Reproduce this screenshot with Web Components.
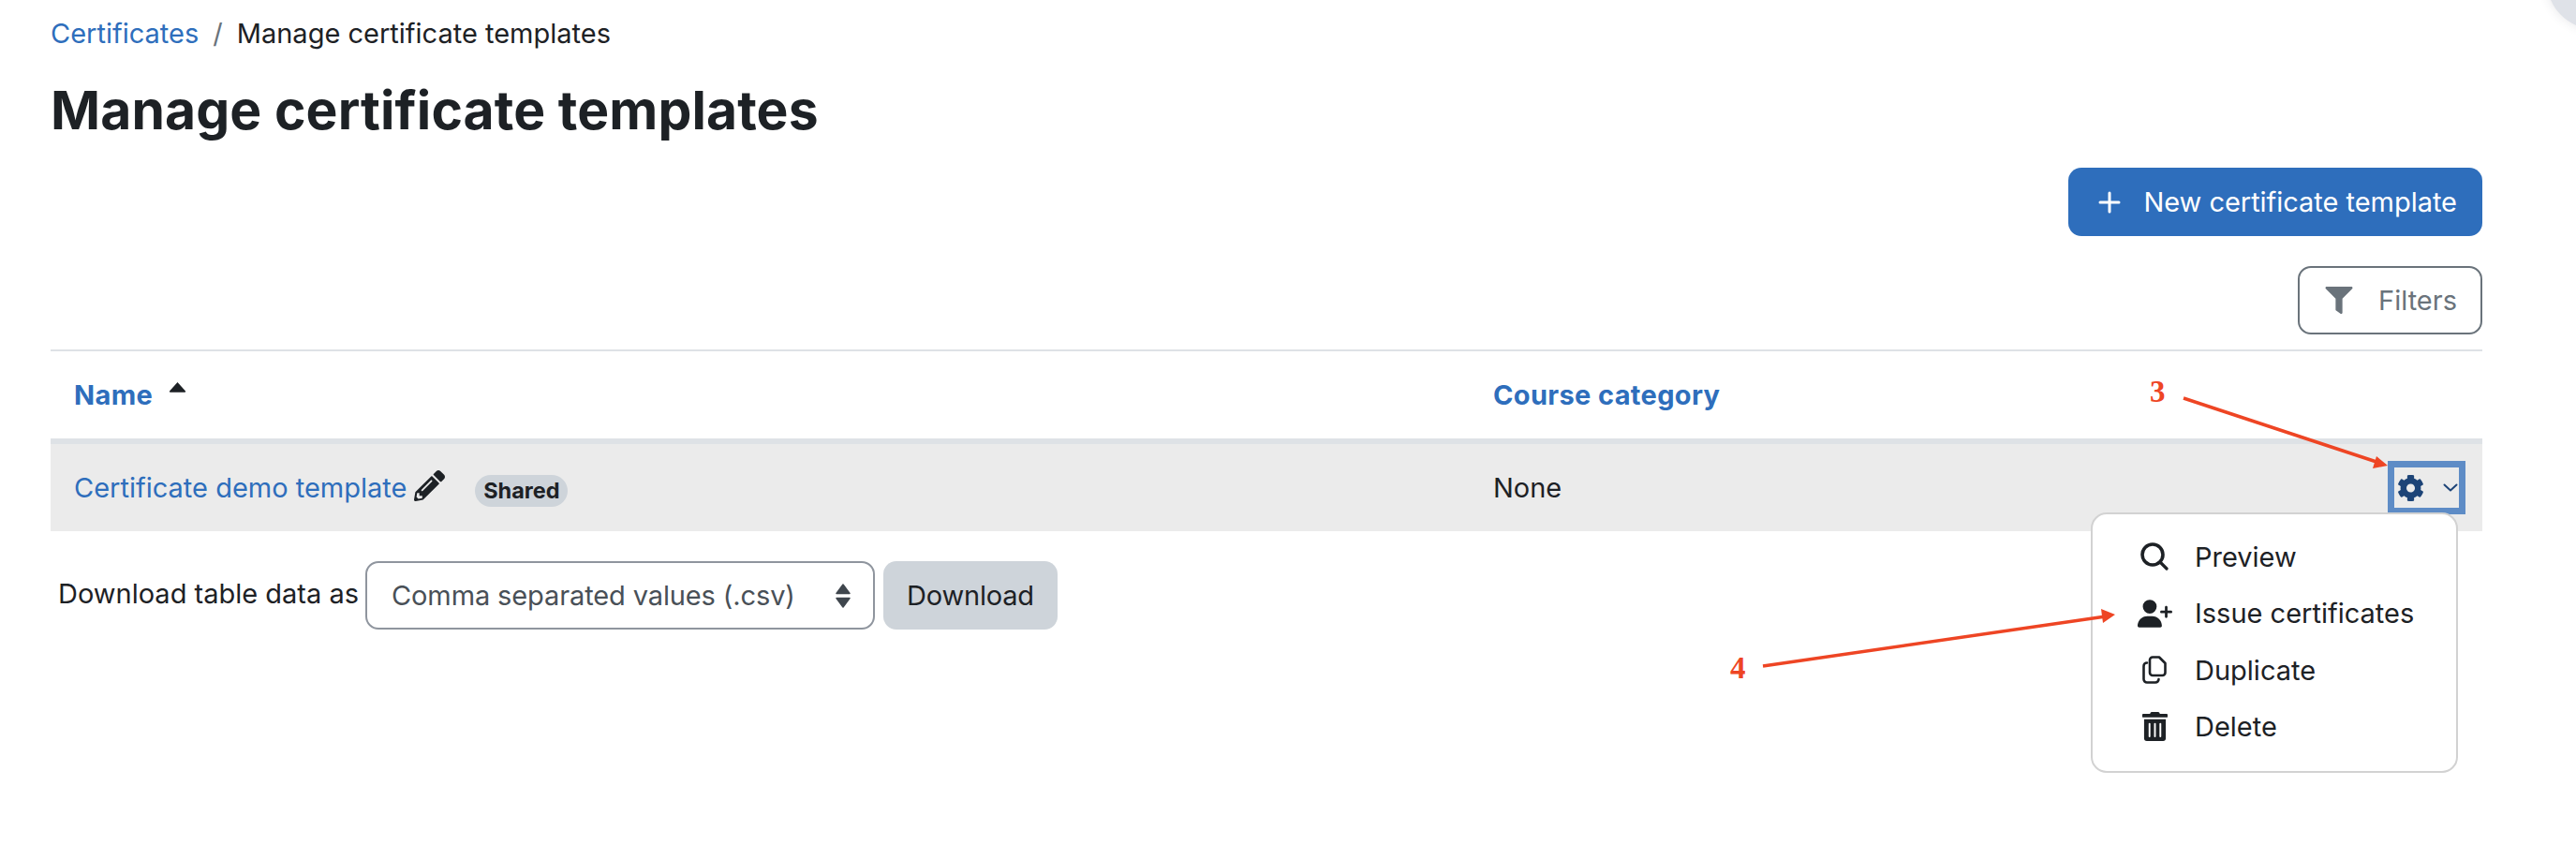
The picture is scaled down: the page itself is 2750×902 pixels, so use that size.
<!DOCTYPE html>
<html lang="en"><head><meta charset="utf-8"><title>Manage certificate templates</title>
<style>
html,body{margin:0;padding:0;background:#fff;overflow:hidden;width:2750px;height:902px}
body{font-family:Inter,"Liberation Sans",sans-serif;font-size:29px;color:#1d2125}
</style></head><body>
<cert-page></cert-page>
<script>
const ICONS={
gear:['0 0 512 512','M487.4 315.7l-42.6-24.6c4.3-23.2 4.3-47 0-70.2l42.6-24.6c4.9-2.8 7.1-8.6 5.5-14-11.1-35.6-30-67.8-54.7-94.6-3.8-4.1-10-5.1-14.8-2.3L380.8 110c-17.9-15.4-38.5-27.3-60.8-35.1V25.8c0-5.6-3.9-10.5-9.4-11.7-36.7-8.2-74.3-7.8-109.2 0-5.5 1.2-9.4 6.1-9.4 11.7V75c-22.2 7.9-42.8 19.8-60.8 35.1L88.7 85.5c-4.9-2.8-11-1.9-14.8 2.3-24.7 26.7-43.6 58.9-54.7 94.6-1.7 5.4.6 11.2 5.5 14L67.3 221c-4.3 23.2-4.3 47 0 70.2l-42.6 24.6c-4.9 2.8-7.1 8.6-5.5 14 11.1 35.6 30 67.8 54.7 94.6 3.8 4.1 10 5.1 14.8 2.3l42.6-24.6c17.9 15.4 38.5 27.3 60.8 35.1v49.2c0 5.6 3.9 10.5 9.4 11.7 36.7 8.2 74.3 7.8 109.2 0 5.5-1.2 9.4-6.1 9.4-11.7v-49.2c22.2-7.9 42.8-19.8 60.8-35.1l42.6 24.6c4.9 2.8 11 1.9 14.8-2.3 24.7-26.7 43.6-58.9 54.7-94.6 1.5-5.5-.7-11.3-5.6-14.1zM256 336c-44.1 0-80-35.9-80-80s35.9-80 80-80 80 35.9 80 80-35.9 80-80 80z'],
pencil:['0 0 512 512','M497.9 142.1l-46.1 46.1c-4.7 4.7-12.3 4.7-17 0l-111-111c-4.7-4.7-4.7-12.3 0-17l46.1-46.1c18.7-18.7 49.1-18.7 67.9 0l60.1 60.1c18.8 18.7 18.8 49.1 0 67.9zM284.2 99.8L21.6 362.4.4 483.9c-2.9 16.4 11.4 30.6 27.8 27.8l121.5-21.3 262.6-262.6c4.7-4.7 4.7-12.3 0-17l-111-111c-4.8-4.7-12.4-4.7-17.1 0zM124.1 339.9c-5.5-5.5-5.5-14.3 0-19.8l154-154c5.5-5.5 14.3-5.5 19.8 0s5.5 14.3 0 19.8l-154 154c-5.5 5.5-14.3 5.5-19.8 0zM88 424h48v36.3l-64.5 11.3-31.1-31.1L51.7 376H88v48z'],
filter:['0 0 512 512','M487.976 0H24.028C2.71 0-8.047 25.866 7.058 40.971L192 225.941V432c0 7.831 3.821 15.17 10.237 19.662l80 55.98C298.02 518.69 320 507.493 320 487.98V225.941l184.947-184.97C520.021 25.896 509.338 0 487.976 0z'],
userplus:['0 0 640 512','M96 128a128 128 0 1 1 256 0A128 128 0 1 1 96 128zM0 482.3C0 383.8 79.8 304 178.3 304h91.4C368.2 304 448 383.8 448 482.3c0 16.4-13.3 29.7-29.7 29.7H29.7C13.3 512 0 498.7 0 482.3zM504 312V248H440c-13.3 0-24-10.7-24-24s10.7-24 24-24h64V136c0-13.3 10.7-24 24-24s24 10.7 24 24v64h64c13.3 0 24 10.7 24 24s-10.7 24-24 24H552v64c0 13.3-10.7 24-24 24s-24-10.7-24-24z'],
trash:['0 0 448 512','M32 464a48 48 0 0 0 48 48h288a48 48 0 0 0 48-48V128H32zm272-256a16 16 0 0 1 32 0v224a16 16 0 0 1-32 0zm-96 0a16 16 0 0 1 32 0v224a16 16 0 0 1-32 0zm-96 0a16 16 0 0 1 32 0v224a16 16 0 0 1-32 0zM432 32H312l-9.4-18.7A24 24 0 0 0 281.1 0H166.8a23.72 23.72 0 0 0-21.4 13.3L136 32H16A16 16 0 0 0 0 48v32a16 16 0 0 0 16 16h416a16 16 0 0 0 16-16V48a16 16 0 0 0-16-16z']
};
function base(css,html){return class extends HTMLElement{constructor(){super();const r=this.attachShadow({mode:'open'});r.innerHTML='<style>'+css+'</style>'+html;}};}
customElements.define('fa-icon',class extends HTMLElement{
  constructor(){super();this.attachShadow({mode:'open'});}
  connectedCallback(){const [vb,d]=ICONS[this.getAttribute('name')];const w=this.getAttribute('w'),h=this.getAttribute('h');
    this.shadowRoot.innerHTML=`<style>:host{display:inline-flex;flex:none;color:inherit}svg{display:block;width:${w}px;height:${h}px;fill:currentColor}</style><svg viewBox="${vb}" aria-hidden="true"><path d="${d}"/></svg>`;}
});
customElements.define('cert-breadcrumb',base(`:host{display:flex;align-items:center;height:42px;margin-top:14px;font-size:29px}
a{color:#2e6ebc;text-decoration:none}.s{color:#6a737b;margin:0 15px}`,
`<a href="#">Certificates</a><span class="s">/</span><span>Manage certificate templates</span>`));
customElements.define('cert-heading',base(`:host{display:block;margin-top:28px}
h1{margin:0;font-size:57px;line-height:68px;font-weight:700;letter-spacing:.1px;color:#1d2125}`,`<h1><slot></slot></h1>`));
customElements.define('cert-button',base(`:host{display:inline-flex;align-items:center;height:73px;box-sizing:border-box;border-radius:14px;font-size:29px;white-space:nowrap}
:host([kind=primary]){background:#2e6ebc;color:#fff;padding:0 27px 0 32px;gap:24px;letter-spacing:-.03px}
:host([kind=outline]){border:2px solid #6a737b;color:#6a737b;padding:0 25px 0 27px;gap:27px}
:host([kind=plain]){background:#ced4da;color:#1d2125;padding:0 25px;letter-spacing:-.2px}`,`<slot name="icon"></slot><slot></slot>`));
customElements.define('cert-actions',base(`:host{display:flex;flex-direction:column;align-items:flex-end;gap:32px;margin-top:27px}`,`<slot></slot>`));
customElements.define('cert-table',base(`:host{display:block;margin-top:16px;border-top:2px solid #dee2e6}`,`<slot></slot>`));
customElements.define('cert-row',base(`:host{display:grid;grid-template-columns:1515px 1fr auto;align-items:center;height:93px}
:host([head]){border-bottom:6px solid #dee2e6;font-weight:700;color:#2e6ebc;letter-spacing:.35px}
:host([band]){background:#ebebeb}`,`<slot></slot>`));
customElements.define('cert-cell',base(`:host{display:flex;align-items:center;padding-left:25px;white-space:nowrap}`,`<slot></slot>`));
customElements.define('cert-badge',base(`:host{display:inline-flex;align-items:center;justify-content:center;width:99px;height:34px;margin-top:6px;border-radius:17px;background:#ced4da;color:#1d2125;font-size:23.500px;font-weight:700}`,`<slot></slot>`));
customElements.define('cert-gear',base(`:host{display:flex;align-items:center;box-sizing:border-box;width:83px;height:57px;margin-right:18px;border:7px solid #5e8cc6;color:#1d4477;padding-left:3px;gap:20px}
svg{display:block;width:16px;height:9px;fill:none;stroke:currentColor;stroke-width:2;stroke-linecap:round;stroke-linejoin:round}`,
`<fa-icon name="gear" w="29" h="30"></fa-icon><svg viewBox="0 0 16 9"><path d="M1.5 1.5 8 7.5l6.5-6"/></svg>`));
customElements.define('cert-download',base(`:host{display:flex;align-items:center;margin-top:32px;padding-left:8px;height:73px}
.l{margin-top:-4px;margin-right:7px;white-space:nowrap}
.sel{box-sizing:border-box;width:544px;height:73px;border:2px solid #8f959e;border-radius:14px;display:flex;align-items:center;justify-content:space-between;padding:0 23px 0 26px;color:#495057;white-space:nowrap;margin-right:9px;letter-spacing:-.12px}
svg{width:18px;height:28px;fill:#3f464d;display:block}`,
`<span class="l">Download table data as</span><div class="sel"><span>Comma separated values (.csv)</span><svg viewBox="0 0 18 28"><path d="M9 2 16 11.5H2zM9 26 2 16.5h14z" stroke="#3f464d" stroke-width="1.5" stroke-linejoin="round"/></svg></div><cert-button kind="plain">Download</cert-button>`));
customElements.define('cert-menu',base(`:host{position:absolute;left:2232px;top:547px;width:392px;height:278px;box-sizing:border-box;background:#fff;border:2px solid #d2d2d2;border-radius:17px;padding:15px 0 17px;display:flex;flex-direction:column}`,`<slot></slot>`));
customElements.define('cert-menu-item',base(`:host{display:flex;align-items:center;height:61.25px;padding-left:41px;gap:18px;color:#1d2125;font-size:29px;white-space:nowrap}
.i{width:50px;display:flex;justify-content:center;align-items:center}`,`<span class="i"><slot name="icon"></slot></span><slot></slot>`));
customElements.define('cert-corner',base(`:host{position:absolute;left:2719px;top:-71px;width:102px;height:102px;border-radius:50%;background:#dfe2e8;box-shadow:0 0 12px rgba(60,60,70,.12)}`,``));
customElements.define('cert-annotations',base(`:host{position:absolute;left:0;top:0;width:2750px;height:902px;pointer-events:none}
svg{position:absolute;left:0;top:0}
span{position:absolute;font:700 33px/1 "Liberation Serif",serif;color:#ee4524}`,
`<svg width="2750" height="902" viewBox="0 0 2750 902"><g stroke="#ee4524" stroke-width="3.5" fill="#ee4524"><line x1="2331" y1="425" x2="2540" y2="494"/><line x1="1882" y1="711" x2="2248" y2="658"/></g><g fill="#ee4524"><path d="M2549 497 2537 487 2533 500zM2258 656 2243 650 2245 665z"/></g></svg><span style="left:2295px;top:402px">3</span><span style="left:1847px;top:697px">4</span>`));
customElements.define('cert-page',base(`:host{display:block;position:relative;width:2750px;height:902px;box-sizing:border-box;padding:0 100px 0 54px;overflow:hidden}
a{color:#2e6ebc;text-decoration:none}
.caret{width:19px;height:12px;margin:-18px 0 0 17px;fill:#1d2125;display:block}
.plus{width:24px;height:24px;display:block;stroke:#fff;stroke-width:3;stroke-linecap:round;fill:none}
.pen{margin:-4px 32px 0 8px}
svg.ic{display:block}`,
`<cert-breadcrumb></cert-breadcrumb>
<cert-heading>Manage certificate templates</cert-heading>
<cert-actions>
<cert-button kind="primary"><svg slot="icon" class="plus" viewBox="0 0 24 24"><path d="M12 2v20M2 12h20"/></svg>New certificate template</cert-button>
<cert-button kind="outline"><fa-icon slot="icon" name="filter" w="30" h="29"></fa-icon>Filters</cert-button>
</cert-actions>
<cert-table>
<cert-row head><cert-cell>Name<svg class="caret" viewBox="0 0 19 12"><path d="M9.5 1 18 10.5c.4.6 0 1.2-.7 1.2H1.700c-.7 0-1.100-.6-.7-1.200z"/></svg></cert-cell><cert-cell>Course category</cert-cell><span></span></cert-row>
<cert-row band><cert-cell><a href="#">Certificate demo template</a><fa-icon class="pen" name="pencil" w="33" h="33"></fa-icon><cert-badge>Shared</cert-badge></cert-cell><cert-cell>None</cert-cell><cert-gear></cert-gear></cert-row>
</cert-table>
<cert-download></cert-download>
<cert-menu>
<cert-menu-item><svg slot="icon" class="ic" width="30" height="30" viewBox="0 0 30 30" fill="none" stroke="#1d2125"><circle cx="13" cy="13" r="11" stroke-width="3.6"/><path d="M21.500 21.500 28 28" stroke-width="3.2" stroke-linecap="round"/></svg>Preview</cert-menu-item>
<cert-menu-item><fa-icon slot="icon" name="userplus" w="37" h="30"></fa-icon>Issue certificates</cert-menu-item>
<cert-menu-item><svg slot="icon" class="ic" width="26" height="30" viewBox="0 0 26 30" fill="none" stroke="#1d2125" stroke-width="2.600" stroke-linejoin="round" stroke-linecap="round"><path d="M11 1.500h7l6.500 6.500v10a3 3 0 0 1-3 3H11a3 3 0 0 1-3-3v-13.500a3 3 0 0 1 3-3z"/><path d="M5 7.500a3.500 3.500 0 0 0-3.500 3.500v14a3.500 3.500 0 0 0 3.500 3.500h9a3.500 3.500 0 0 0 3.500-3.500"/></svg>Duplicate</cert-menu-item>
<cert-menu-item><fa-icon slot="icon" name="trash" w="27" h="31"></fa-icon>Delete</cert-menu-item>
</cert-menu>
<cert-annotations></cert-annotations>
<cert-corner></cert-corner>`));
</script>
</body></html>
